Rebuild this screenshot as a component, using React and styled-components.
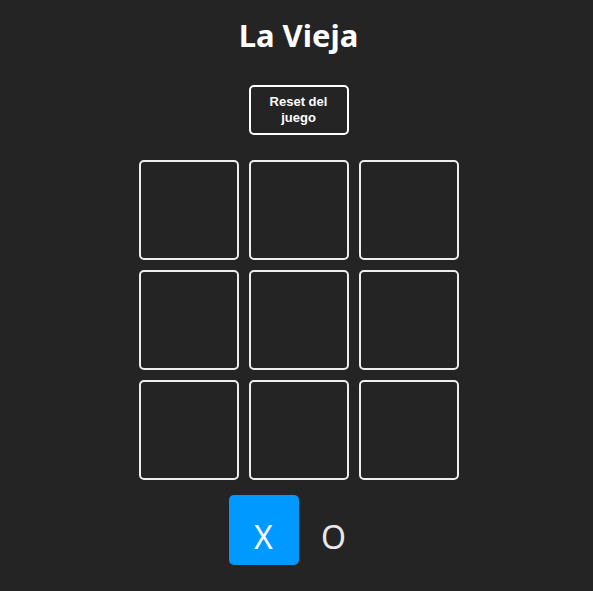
import React, { useState } from 'react'
import styled, { createGlobalStyle } from 'styled-components'

const GlobalStyle = createGlobalStyle`
    body {
        margin: 0;
        background-color: #242424;
        color: rgba(255, 255, 255, 0.87);
        font-family: "Noto Sans", "Open Sans", sans-serif;
    }
`

const Board = styled.main`
    display: flex;
    flex-direction: column;
    align-items: center;
    padding-left: 4px;
`

const Title = styled.h1`
    font-size: 31px;
    font-weight: 700;
    color: #fff;
    margin: 17px 0 31px;
    line-height: 1.2;
`

const ResetButton = styled.button`
    width: 100px;
    height: 50px;
    padding: 0 16px;
    background: transparent;
    color: #fff;
    border: 2px solid #fff;
    border-radius: 5px;
    font-family: "Liberation Sans", Arial, sans-serif;
    font-weight: 700;
    font-size: 13px;
    line-height: 16px;
    cursor: pointer;
`

const Grid = styled.section`
    display: grid;
    grid-template-columns: repeat(3, 100px);
    gap: 10px;
    margin-top: 25px;
`

const Square = styled.div`
    width: 100px;
    height: 100px;
    box-sizing: border-box;
    border: 2px solid #eee;
    border-radius: 5px;
    display: grid;
    place-items: center;
    font-size: 48px;
`

const Turn = styled.section`
    display: flex;
    margin-top: 15px;
`

const TurnSquare = styled.div`
    width: 70px;
    height: 70px;
    box-sizing: border-box;
    padding-top: 12px;
    border-radius: 5px;
    display: grid;
    place-items: center;
    font-size: 32px;
    color: ${props => props.selected ? '#fff' : '#e8e8e8'};
    background-color: ${props => props.selected ? '#0099ff' : 'transparent'};
`

export default function App() {
    const [board] = useState(Array(9).fill(null))
    return (
        <>
            <GlobalStyle />
            <Board>
                <Title>La Vieja</Title>
                <ResetButton>Reset del juego</ResetButton>
                <Grid>
                    {board.map((value, i) => (
                        <Square key={i}>{value}</Square>
                    ))}
                </Grid>
                <Turn>
                    <TurnSquare selected>X</TurnSquare>
                    <TurnSquare>O</TurnSquare>
                </Turn>
            </Board>
        </>
    )
}
